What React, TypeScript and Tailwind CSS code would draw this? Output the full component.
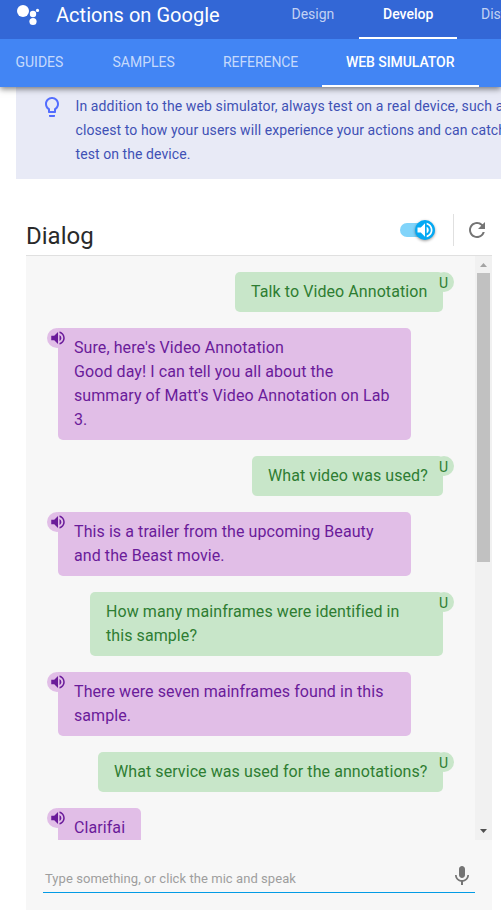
import React from "react";
import { MdMic, MdRefresh, MdVolumeUp } from "react-icons/md";

type Message = { from: "user" | "bot"; lines: string[]; width: string };

const messages: Message[] = [
  { from: "user", lines: ["Talk to Video Annotation"], width: "w-[208px]" },
  {
    from: "bot",
    lines: [
      "Sure, here's Video Annotation",
      "Good day! I can tell you all about the",
      "summary of Matt's Video Annotation on Lab",
      "3.",
    ],
    width: "w-[353px]",
  },
  { from: "user", lines: ["What video was used?"], width: "w-[191px]" },
  {
    from: "bot",
    lines: ["This is a trailer from the upcoming Beauty", "and the Beast movie."],
    width: "w-[353px]",
  },
  {
    from: "user",
    lines: ["How many mainframes were identified in", "this sample?"],
    width: "w-[353px]",
  },
  {
    from: "bot",
    lines: ["There were seven mainframes found in this", "sample."],
    width: "w-[353px]",
  },
  { from: "user", lines: ["What service was used for the annotations?"], width: "w-[345px]" },
  { from: "bot", lines: ["Clarifai"], width: "w-[83px]" },
];

function AssistantLogo() {
  return (
    <svg className="ml-4 mt-[3px] h-6 w-6 shrink-0" viewBox="0 0 24 24" fill="#fff">
      <circle cx="7" cy="8" r="6" />
      <circle cx="17" cy="11" r="3.2" />
      <circle cx="21.5" cy="7.4" r="1.6" />
      <circle cx="17" cy="18.5" r="3.6" />
    </svg>
  );
}

function Bulb() {
  return (
    <svg className="ml-6 mt-2 h-6 w-6 shrink-0" viewBox="0 0 24 24" fill="#536dfe">
      <path d="M9 21c0 .55.45 1 1 1h4c.55 0 1-.45 1-1v-1H9v1zm3-19C8.14 2 5 5.14 5 9c0 2.38 1.19 4.47 3 5.74V17c0 .55.45 1 1 1h6c.55 0 1-.45 1-1v-2.26c1.81-1.27 3-3.36 3-5.74 0-3.86-3.14-7-7-7zm2.85 11.1-.85.6V16h-4v-2.3l-.85-.6C7.8 12.16 7 10.63 7 9c0-2.76 2.24-5 5-5s5 2.24 5 5c0 1.63-.8 3.16-2.15 4.1z" />
    </svg>
  );
}

function Bubble({ message }: { message: Message }) {
  const user = message.from === "user";
  return (
    <div
      className={`relative shrink-0 whitespace-nowrap rounded-[5px] px-4 py-2 text-base leading-6 tracking-[0.08px] ${message.width} ${
        user ? "self-end bg-[#c8e6c9] text-[#2e7d32]" : "self-start rounded-tl-none bg-[#e1bee7] text-[#6a1b9a]"
      }`}
    >
      {user ? (
        <span className="absolute -right-[11px] top-0 flex h-5 w-5 items-center justify-center rounded-full bg-[#c8e6c9] pr-px pt-px text-sm leading-5">
          U
        </span>
      ) : (
        <span className="absolute -left-[11px] top-0 flex h-5 w-5 items-center justify-center rounded-full bg-[#e1bee7]">
          <MdVolumeUp className="ml-0.5 h-[18px] w-[18px] shrink-0" />
        </span>
      )}
      {message.lines.map((line) => (
        <p key={line}>{line}</p>
      ))}
    </div>
  );
}

export default function App() {
  return (
    <div className="h-[913px] w-[501px] overflow-hidden bg-white font-['Roboto','Liberation_Sans',sans-serif]">
      <header className="relative z-10 whitespace-nowrap shadow-[0_2px_6px_rgba(0,0,0,0.5)]">
        <div className="flex h-[39px] overflow-hidden bg-[#3367d6] text-white">
          <AssistantLogo />
          <div className="ml-4 mt-[3px] w-[211.5px] shrink-0 text-[20px] leading-6 tracking-[0.03px]">Actions on Google</div>
          <nav className="flex text-sm font-medium leading-7">
            <a className="w-[91.5px] shrink-0 pl-6 font-normal text-[#c2d1f3]">Design</a>
            <a className="w-[98px] shrink-0 border-b-2 border-white pl-6">Develop</a>
            <a className="w-[98px] shrink-0 pl-6 font-normal text-[#c2d1f3]">Distribute</a>
          </nav>
        </div>
        <nav className="flex h-12 overflow-hidden bg-[#4285f4] text-sm leading-[46px] text-[#c6dafc]">
          <a className="w-[88px] shrink-0 pl-[15.5px]">GUIDES</a>
          <a className="w-[111px] shrink-0 pl-[24.5px]">SAMPLES</a>
          <a className="w-[123px] shrink-0 pl-6 tracking-[-0.08px]">REFERENCE</a>
          <a className="w-[157px] shrink-0 border-b-2 border-white pl-6 font-medium tracking-[-0.07px] text-white">
            WEB SIMULATOR
          </a>
        </nav>
      </header>

      <aside className="ml-4 flex h-[92px] overflow-hidden bg-[#e8eaf6] text-[#3f51b5]">
        <Bulb />
        <div className="ml-[11.5px] mt-[7px] whitespace-nowrap text-sm leading-6 tracking-[0.08px]">
          <p className="tracking-[0.12px]">In addition to the web simulator, always test on a real device, such as</p>
          <p>closest to how your users will experience your actions and can catch</p>
          <p>test on the device.</p>
        </div>
      </aside>

      <main className="ml-[26px] mt-[35px] w-[466px]">
        <div className="flex h-[42px] border-b border-[#e0e0e0]">
          <h1 className="mt-[6px] flex-1 text-2xl leading-8 text-[#2a2a2a]">Dialog</h1>
          <div className="mt-[9px] flex h-[14px] w-[35px] items-center justify-end rounded-full bg-[#81d4fa]">
            <span className="flex h-5 w-5 shrink-0 items-center justify-center rounded-full bg-[#03a9f4] text-white shadow-[0_1px_3px_rgba(0,0,0,0.4)]">
              <MdVolumeUp className="h-5 w-5" />
            </span>
          </div>
          <div className="ml-[18px] h-8 w-px bg-[#e0e0e0]" />
          <MdRefresh className="ml-[11px] mr-[3px] mt-1 h-6 w-6 text-[#757575]" />
        </div>
        <section className="h-[654px] bg-[#f7f7f7]">
          <div className="flex h-[584px] overflow-hidden">
            <div className="flex flex-1 flex-col gap-4 pl-8 pr-8 pt-4">
              {messages.map((message) => (
                <Bubble key={message.lines[0]} message={message} />
              ))}
            </div>
            <div className="flex w-[17px] flex-col items-center bg-[#f1f1f1]">
              <svg className="h-[17px] w-[17px] shrink-0" viewBox="0 0 17 17" fill="#a3a3a3">
                <path d="M5 11h7L8.5 7z" />
              </svg>
              <div className="h-[289px] w-[13px] shrink-0 bg-[#c1c1c1]" />
              <svg className="mt-auto h-[17px] w-[17px] shrink-0" viewBox="0 0 17 17" fill="#505050">
                <path d="M5 6h7L8.5 10z" />
              </svg>
            </div>
          </div>
          <div className="ml-[17px] flex h-[53px] w-[432px] border-b border-[#039be5]">
            <p className="ml-0.5 mt-[29px] flex-1 text-[13px] leading-5 tracking-[0.06px] text-[#9e9e9e]">
              Type something, or click the mic and speak
            </p>
            <MdMic className="mr-[1px] mt-6 h-6 w-6 text-[#757575]" />
          </div>
        </section>
      </main>
    </div>
  );
}
